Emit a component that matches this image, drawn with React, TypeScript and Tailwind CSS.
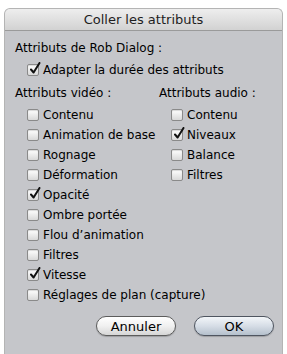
import React from 'react'

const FONT = { fontFamily: '"DejaVu Sans", "Liberation Sans", Arial, sans-serif' }

function Case({ coche }: { coche?: boolean }) {
  return (
    <span className="relative inline-block w-[12px] h-[12px] rounded-[2px] border border-[#8a8a8a] bg-gradient-to-b from-[#ffffff] to-[#d9d9d9] shadow-[inset_0_1px_1px_rgba(0,0,0,0.15)] shrink-0">
      {coche && (
        <svg className="absolute left-[1px] top-[-3px]" width="12" height="13" viewBox="0 0 12 13">
          <path d="M2 7.5 L4.6 10.5 L10.5 1" fill="none" stroke="#111" strokeWidth="2" strokeLinecap="round" strokeLinejoin="round" />
        </svg>
      )}
    </span>
  )
}

function Ligne({ label, coche }: { label: string; coche?: boolean }) {
  return (
    <div className="flex items-center h-[20px] pl-[12px] gap-[4px] whitespace-nowrap">
      <Case coche={coche} />
      <span>{label}</span>
    </div>
  )
}

const VIDEO: [string, boolean][] = [
  ['Contenu', false],
  ['Animation de base', false],
  ['Rognage', false],
  ['Déformation', false],
  ['Opacité', true],
  ['Ombre portée', false],
  ['Flou d’animation', false],
  ['Filtres', false],
  ['Vitesse', true],
  ['Réglages de plan (capture)', false],
]

const AUDIO: [string, boolean][] = [
  ['Contenu', false],
  ['Niveaux', true],
  ['Balance', false],
  ['Filtres', false],
]

export default function App() {
  return (
    <div className="w-[287px] h-[354px] bg-white overflow-hidden pt-[8px] pl-[4px]" style={FONT}>
      <div className="w-[279px] h-[346px] rounded-t-[6px] border border-b-0 border-[#b4b4b4] bg-[#c5c6ca] overflow-hidden text-[12px] text-black">
        <div className="h-[22px] flex items-center justify-center bg-gradient-to-b from-[#eeeeee] to-[#d2d2d2] border-b border-[#9a9a9a] text-[13px] text-[#1e1e1e]">
          Coller les attributs
        </div>

        <div className="pl-[10px] pt-[7px]">
          <div className="h-[20px] flex items-center">Attributs de Rob Dialog :</div>
          <div className="mt-[2px]">
            <Ligne label="Adapter la durée des attributs" coche />
          </div>

          <div className="mt-[3px] grid grid-cols-[144px_1fr]">
            <div className="min-w-0">
              <div className="h-[20px] flex items-center">Attributs vidéo :</div>
              <div className="mt-[2px]">
                {VIDEO.map(([l, c]) => (
                  <Ligne key={l} label={l} coche={c} />
                ))}
              </div>
            </div>
            <div>
              <div className="h-[20px] flex items-center">Attributs audio :</div>
              <div className="mt-[2px]">
                {AUDIO.map(([l, c]) => (
                  <Ligne key={l} label={l} coche={c} />
                ))}
              </div>
            </div>
          </div>

          <div className="mt-[11px] flex gap-[18px] pl-[81px]">
            <button className="w-[80px] h-[20px] rounded-full border border-[#5c5c5c] bg-gradient-to-b from-[#ffffff] via-[#f0f0f0] to-[#d6d6d6] text-[13px] leading-none shadow-[0_1px_1px_rgba(0,0,0,0.2)]">
              Annuler
            </button>
            <button className="w-[80px] h-[20px] rounded-full border border-[#4f5560] bg-gradient-to-b from-[#f3f6f9] via-[#d6dde6] to-[#b5c0cc] text-[13px] leading-none shadow-[0_1px_1px_rgba(0,0,0,0.2)]">
              OK
            </button>
          </div>
        </div>
      </div>
    </div>
  )
}
